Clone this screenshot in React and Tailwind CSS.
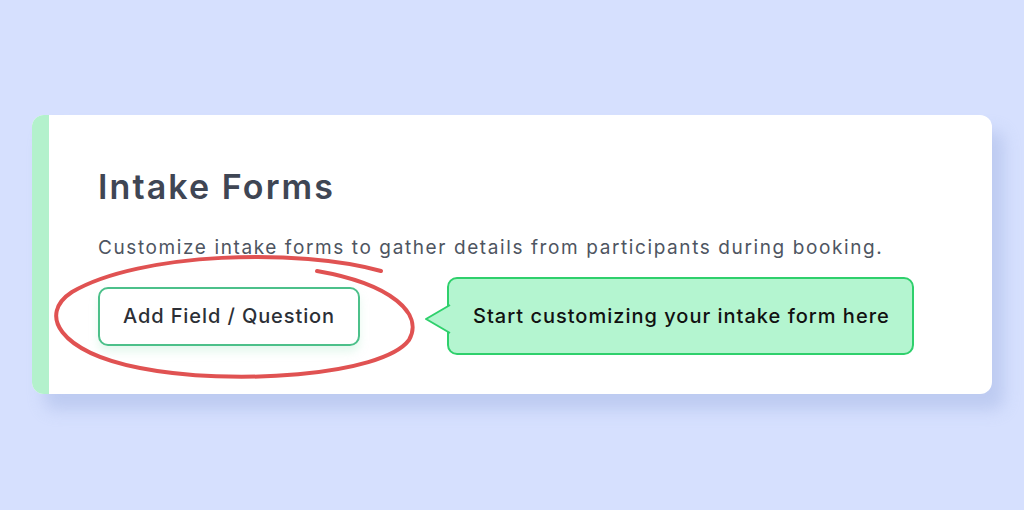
import React from "react";

const Scribble = () => (
  <svg
    className="pointer-events-none absolute left-0 top-0"
    width="1024"
    height="510"
    viewBox="0 0 1024 510"
    fill="none"
  >
    <path
      d="M381 271 C300 248, 140 252, 72 292 C38 314, 58 352, 140 368 C230 386, 382 376, 409 340 C424 314, 392 284, 317 271"
      stroke="#e05252"
      strokeWidth="4"
      strokeLinecap="round"
    />
  </svg>
);

const Tooltip = () => (
  <div className="relative ml-[87px] flex h-[78px] w-[467px] items-center rounded-[10px] border-2 border-[#2fd06c] bg-[#b4f5d0] pl-[24px]">
    <svg
      className="absolute left-[-25px] top-[25px]"
      width="27"
      height="30"
      viewBox="0 0 27 30"
    >
      <path d="M26 1 L2 15 L26 29" fill="#b4f5d0" stroke="#2fd06c" strokeWidth="2" strokeLinejoin="round" />
    </svg>
    <span className="text-[20px] font-medium tracking-[1px] text-[#111]">
      Start customizing your intake form here
    </span>
  </div>
);

export default function App() {
  return (
    <div className="relative min-h-[510px] w-full bg-[#d6e0fe] pl-[32px] pt-[115px] font-['Inter',sans-serif]">
      <div className="flex h-[279px] w-[960px] overflow-hidden rounded-[12px] bg-white shadow-[12px_16px_16px_rgba(160,178,226,0.45)]">
        <div className="w-[17px] bg-[#b3f1cc]" />
        <div className="flex flex-col pl-[49px] pt-[52px]">
          <h1 className="text-[34px] font-semibold leading-[40px] tracking-[2.1px] text-[#3f4654]">
            Intake Forms
          </h1>
          <p className="mt-[28px] whitespace-nowrap text-[19px] leading-[26px] tracking-[1.6px] text-[#4e5561]">
            Customize intake forms to gather details from participants during booking.
          </p>
          <div className="mt-[16px] flex items-center">
            <button className="h-[59px] w-[262px] rounded-[10px] border-2 border-[#4cc08a] bg-white text-[20px] font-medium tracking-[0.9px] text-[#2c2f36] shadow-[0_6px_8px_rgba(180,235,205,0.35)]">
              Add Field / Question
            </button>
            <Tooltip />
          </div>
        </div>
      </div>
      <Scribble />
    </div>
  );
}
